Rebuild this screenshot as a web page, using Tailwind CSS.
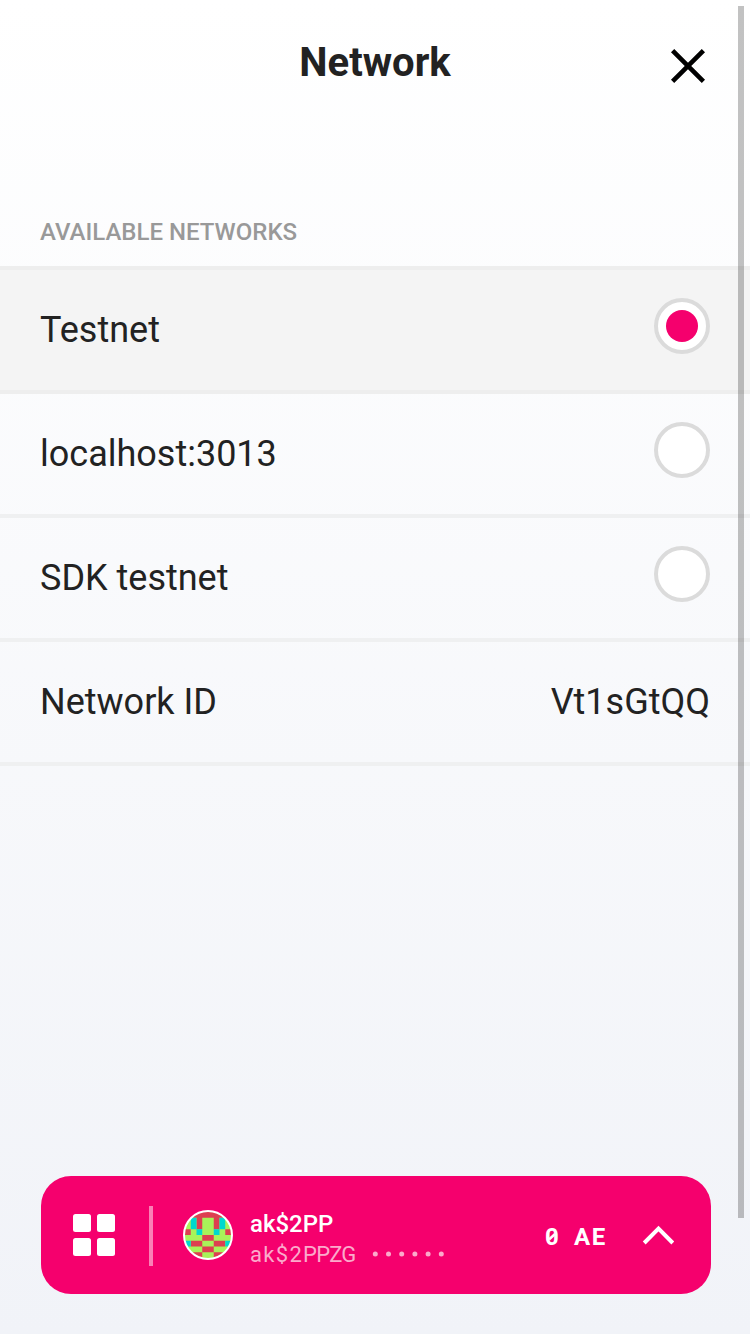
<!DOCTYPE html>
<html lang="en">
<head>
<meta charset="utf-8">
<title>Network</title>
<script src="https://cdn.jsdelivr.net/npm/@tailwindcss/browser@4"></script>
</head>
<body class="font-['Roboto',sans-serif] text-[#222]">
<div class="relative flex h-[1334px] w-[750px] flex-col overflow-hidden bg-[linear-gradient(to_bottom,#fff,#f1f3f8)]">
  <header class="grid h-[126px] grid-cols-[80px_1fr_80px] items-center px-[22px]">
    <h1 class="col-start-2 text-center text-[40px] font-bold leading-[48px]">Network</h1>
    <button class="flex h-12 w-12 justify-self-center pl-1" aria-label="Close">
      <svg class="mt-[7px] h-10 w-10 shrink-0" viewBox="0 0 40 40" fill="none" stroke="#000" stroke-width="4.6"><path d="M4.6 4.6 35.4 35.4M35.4 4.6 4.6 35.4"/></svg>
    </button>
  </header>
  <main class="flex flex-1 flex-col">
    <h2 class="mt-[91px] h-[49px] px-10 text-[24px] font-medium leading-[31px] text-[#999]">AVAILABLE NETWORKS</h2>
    <ul class="text-[36px] leading-[44px]">
      <li class="flex h-32 items-center justify-between border-y-4 border-[#eee] bg-[#f4f4f4] px-10"><span>Testnet</span><span class="mb-2 flex h-14 w-14 items-center justify-center rounded-full border-4 border-[#dbdbdb] bg-white"><span class="h-8 w-8 rounded-full bg-[#f5006d]"></span></span></li>
      <li class="flex h-[124px] items-center justify-between border-b-4 border-[#eff0f1] px-10"><span>localhost:3013</span><span class="mb-2 h-14 w-14 rounded-full border-4 border-[#dbdbdb] bg-white"></span></li>
      <li class="flex h-[124px] items-center justify-between border-b-4 border-[#eff0f1] px-10"><span>SDK testnet</span><span class="mb-2 h-14 w-14 rounded-full border-4 border-[#dbdbdb] bg-white"></span></li>
      <li class="flex h-[124px] items-center justify-between border-b-4 border-[#eff0f1] px-10"><span>Network ID</span><span>Vt1sGtQQ</span></li>
    </ul>
  </main>
  <footer class="mb-10 ml-[41px] flex h-[118px] w-[670px] items-center rounded-[30px] bg-[#f5006d] pl-8 text-white">
    <svg class="h-[42px] w-[42px] shrink-0" viewBox="0 0 42 42" fill="#fff"><rect width="18" height="18" rx="2.5"/><rect x="24" width="18" height="18" rx="2.5"/><rect y="24" width="18" height="18" rx="2.5"/><rect x="24" y="24" width="18" height="18" rx="2.5"/></svg>
    <div class="ml-[34px] mt-[2px] h-[60px] w-1 shrink-0 bg-white/50"></div>
    <svg class="ml-[30px] h-[50px] w-[50px] shrink-0" viewBox="0 0 50 50">
      <defs><clipPath id="face"><circle cx="25" cy="25" r="24"/></clipPath></defs>
      <g clip-path="url(#face)"><g transform="translate(2 2) scale(5.75)">
        <rect x="-1" y="-1" width="10" height="10" fill="#a8f359"/>
        <path fill="#dd3f50" d="M-1-1h10v2h-10zM2 1h1v2h-1zM5 1h1v2h-1zM-1 3h2v1h-2zM7 3h2v1h-2zM3 4h2v1h-2zM1 5h2v1h-2zM5 5h2v1h-2zM3 6h2v1h-2zM0 7h3v2h-3zM5 7h3v2h-3z"/>
        <path fill="#00d8ce" d="M1 1h1v2h-1zM6 1h1v2h-1zM2 3h1v1h-1zM5 3h1v1h-1zM-1 5h2v1h-2zM7 5h2v1h-2z"/>
      </g></g>
      <circle cx="25" cy="25" r="24" fill="none" stroke="#fff" stroke-width="2"/>
    </svg>
    <div class="ml-[17px] w-[240px] shrink-0">
      <div class="mt-[7px] text-[24px] font-medium leading-[32px]">ak$2PP</div>
      <div class="flex h-[30px] items-center text-[22px] leading-[28px] text-[#fbaacb]">
        <span class="w-[106px] pt-px"><span class="tracking-[1.3px]">ak$2</span><span class="tracking-[-0.7px]">PPZG</span></span>
        <svg class="mb-[2px] ml-4 h-3 w-[74px]" viewBox="0 0 74 12" fill="currentColor"><circle cx="3.3" cy="6" r="2.5"/><circle cx="16.5" cy="6" r="2.5"/><circle cx="29.7" cy="6" r="2.5"/><circle cx="42.9" cy="6" r="2.5"/><circle cx="56.1" cy="6" r="2.5"/><circle cx="69.3" cy="6" r="2.5"/></svg>
      </div>
    </div>
    <div class="relative ml-[55px] mt-[3px] flex w-[65px] shrink-0 text-[24px] font-bold leading-[30px]"><span class="whitespace-pre tracking-[4.6px]">0 </span><span class="tracking-[1.6px]">AE</span>
      <svg class="absolute left-0 top-0 h-[30px] w-[14px]" viewBox="0 0 14 30"><path d="M4 17.5 10 12" stroke="#fff" stroke-width="2.5"/></svg>
    </div>
    <svg class="ml-[32px] h-5 w-8 shrink-0" viewBox="0 0 32 20" fill="none" stroke="#fff" stroke-width="4"><path d="m2.2 18 14.3-14.3 14.3 14.3"/></svg>
  </footer>
  <div class="absolute left-[738px] top-[6px] h-[1212px] w-[6px] bg-black/24"></div>
</div>
</body>
</html>
